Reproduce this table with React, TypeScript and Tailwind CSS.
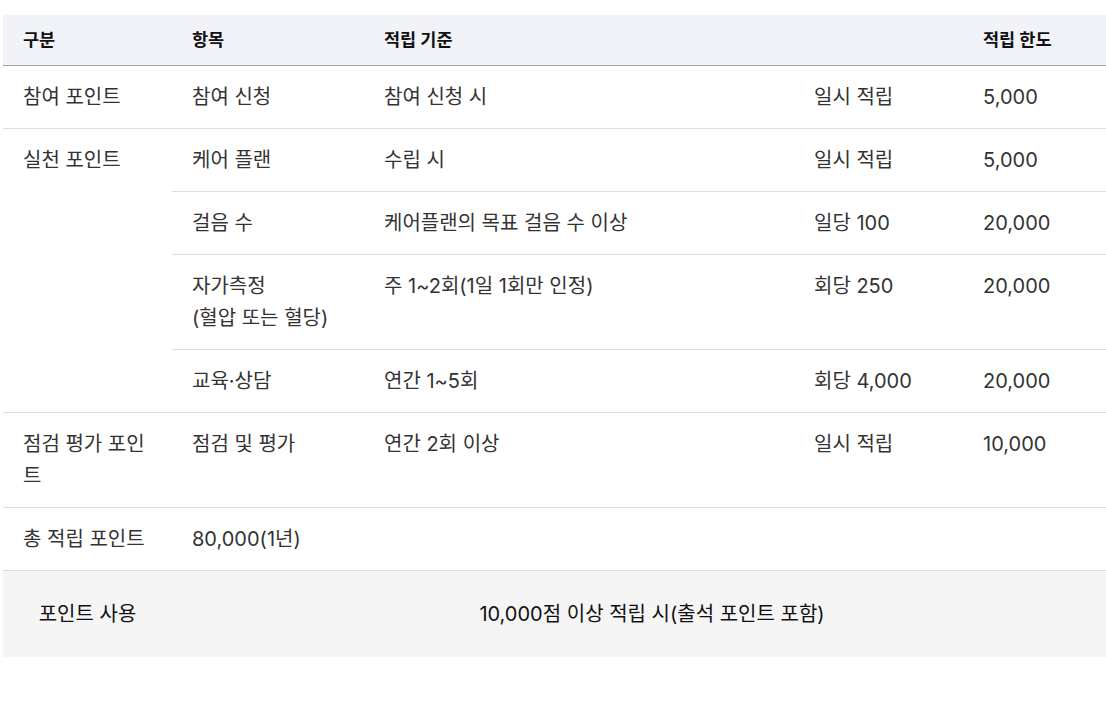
const FONT = "font-['Inter','Noto_Sans_CJK_KR',sans-serif]";

type Row = {
  item: React.ReactNode;
  rule: string;
  unit: string;
  limit: string;
};

const practiceRows: Row[] = [
  { item: "케어 플랜", rule: "수립 시", unit: "일시 적립", limit: "5,000" },
  { item: "걸음 수", rule: "케어플랜의 목표 걸음 수 이상", unit: "일당 100", limit: "20,000" },
  {
    item: (
      <>
        자가측정
        <br />
        (혈압 또는 혈당)
      </>
    ),
    rule: "주 1~2회(1일 1회만 인정)",
    unit: "회당 250",
    limit: "20,000",
  },
  { item: "교육·상담", rule: "연간 1~5회", unit: "회당 4,000", limit: "20,000" },
];

const td = "border-b border-[#dddddd] px-5 py-[15px] align-top";
const th = "border-b border-[#9fa2ad] px-5 py-[11px] font-bold leading-[28px]";

export default function App() {
  return (
    <div className={`${FONT} w-full overflow-hidden bg-white pt-[15px] pl-[3px] h-[706px]`}>
      <table className="w-[1129px] table-fixed border-collapse text-[20px] leading-[32px] text-[#333333]">
        <colgroup>
          <col className="w-[169px]" />
          <col className="w-[192px]" />
          <col className="w-[430px]" />
          <col className="w-[169px]" />
          <col className="w-[169px]" />
        </colgroup>
        <thead>
          <tr className="bg-[#f2f3f8] text-left text-[17.5px] text-[#111111]">
            <th className={th}>구분</th>
            <th className={th}>항목</th>
            <th colSpan={2} className={th}>
              적립 기준
            </th>
            <th className={th}>적립 한도</th>
          </tr>
        </thead>
        <tbody>
          <tr>
            <td className={td}>참여 포인트</td>
            <td className={td}>참여 신청</td>
            <td className={td}>참여 신청 시</td>
            <td className={td}>일시 적립</td>
            <td className={td}>5,000</td>
          </tr>
          {practiceRows.map((r, i) => (
            <tr key={i}>
              {i === 0 && (
                <td rowSpan={practiceRows.length} className={td}>
                  실천 포인트
                </td>
              )}
              <td className={td}>{r.item}</td>
              <td className={td}>{r.rule}</td>
              <td className={td}>{r.unit}</td>
              <td className={td}>{r.limit}</td>
            </tr>
          ))}
          <tr>
            <td className={td}>점검 평가 포인트</td>
            <td className={td}>점검 및 평가</td>
            <td className={td}>연간 2회 이상</td>
            <td className={td}>일시 적립</td>
            <td className={td}>10,000</td>
          </tr>
          <tr>
            <td className={td}>총 적립 포인트</td>
            <td colSpan={4} className={td}>
              80,000(1년)
            </td>
          </tr>
          <tr className="bg-[#f5f5f5] text-[#111111]">
            <td className="px-5 py-[27px] text-center">포인트 사용</td>
            <td colSpan={4} className="px-5 py-[27px] text-center">
              10,000점 이상 적립 시(출석 포인트 포함)
            </td>
          </tr>
        </tbody>
      </table>
    </div>
  );
}
